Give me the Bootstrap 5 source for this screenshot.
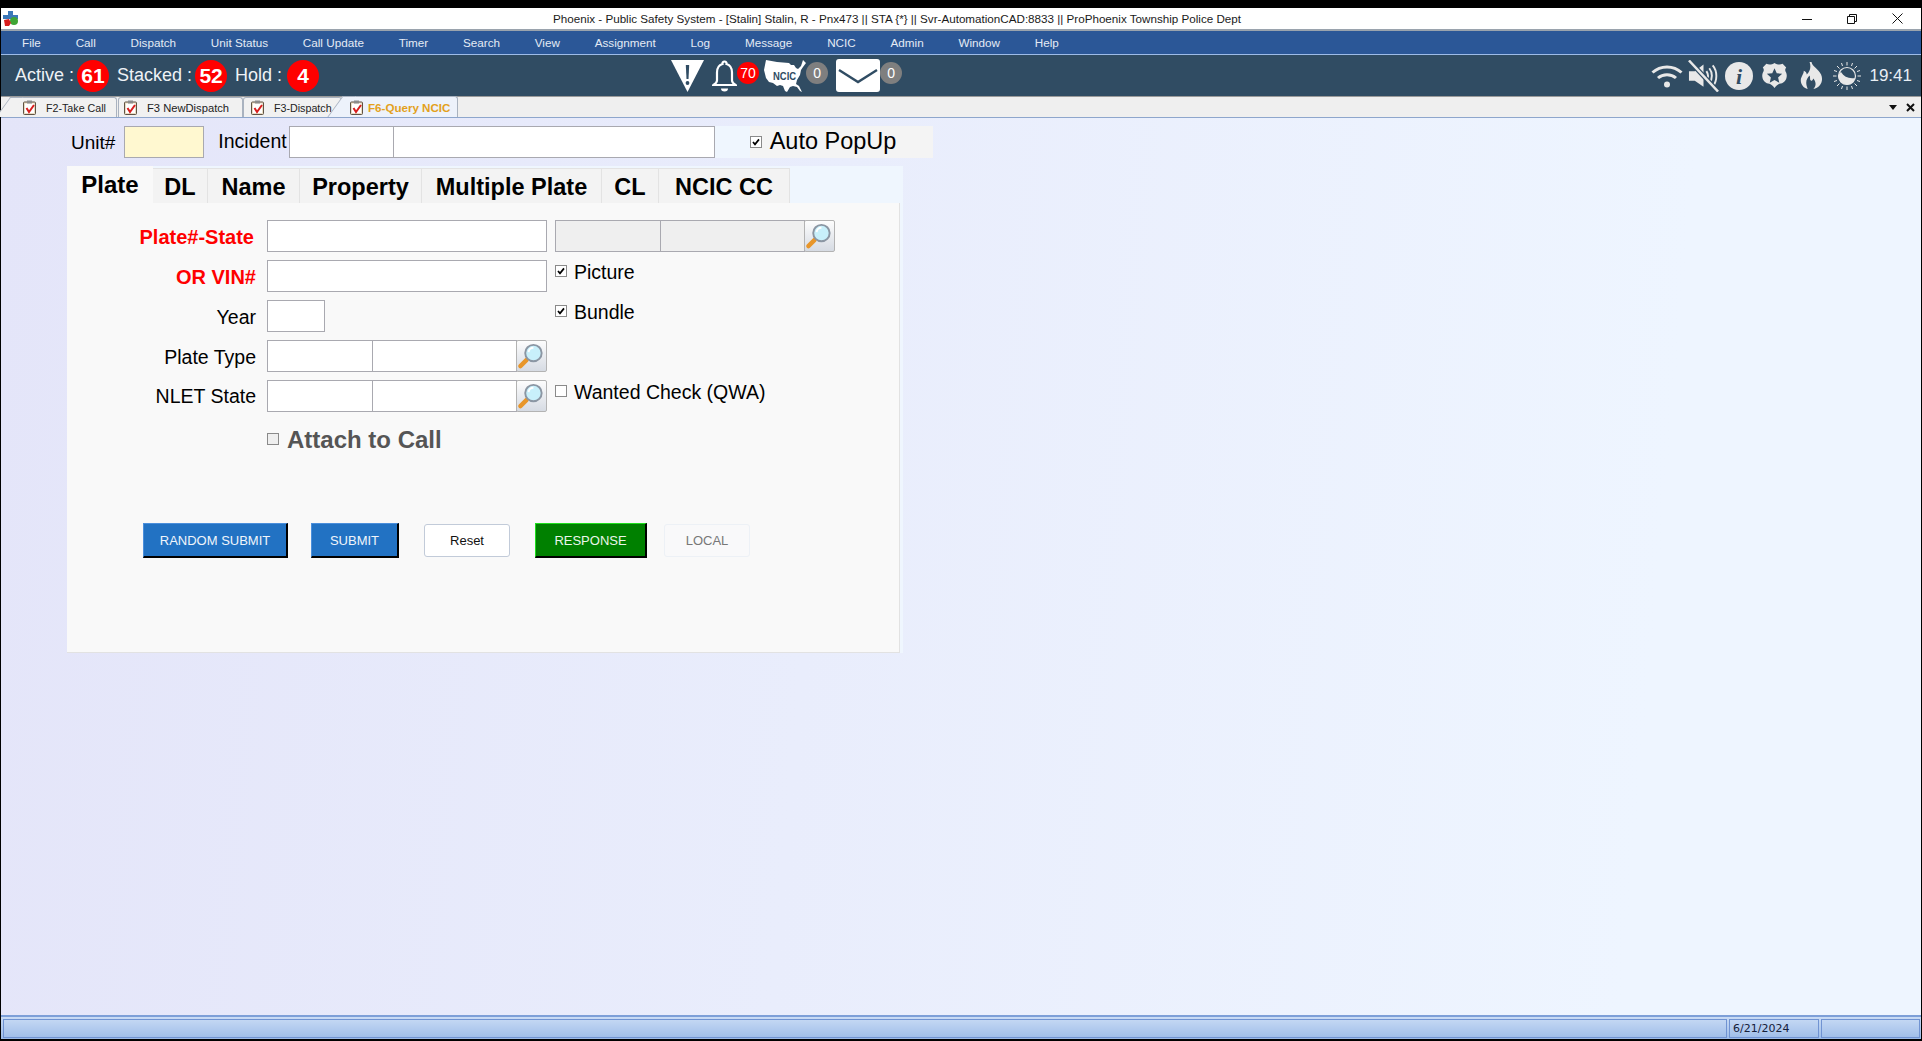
<!DOCTYPE html>
<html lang="en">
<head>
    <meta charset="UTF-8">
    <title>Phoenix - Public Safety System</title>
    <link href="https://cdn.jsdelivr.net/npm/bootstrap@5.3.0/dist/css/bootstrap.min.css" rel="stylesheet">
    <style>
        html, body { height: 100%; }
        body { background: #000; padding: 8px 1px 2px; font-family: "Liberation Sans", Arial, sans-serif; color: #000; overflow: hidden; }
        .app-shell { height: 100%; }

        /* window title */
        .title-bar { height: 21px; background: #fff; font-size: 11.65px; line-height: 21px; padding-left: 2px; }
        .title-text { margin-left: 534px; color: #1a1a1a; white-space: nowrap; }
        .win-controls { gap: 35px; padding-right: 18px; }

        /* menu */
        .menu-bar { height: 26px; padding: 1px 0 0 21px; background: #2b5797; border-top: 2px solid #9aa3ad; border-bottom: 1px solid #9dbbe8; gap: 34.800px; font-size: 11.700px; color: #e4ebf5; flex-wrap: nowrap; justify-content: flex-start; }

        /* counters and tray */
        .status-strip { height: 42px; background: #304c63; border-bottom: 1px solid #9a9a9a; color: #eef2f6; padding-left: 14px; }
        .count-label { font-size: 18px; white-space: nowrap; }
        .count-dot { width: 32px; height: 32px; background: #f00; color: #fff; font-weight: 700; font-size: 21px; margin: 0 8px 0 3px; }
        .count-dot.count-hold { margin-left: 5px; }
        .alert-icons { margin-left: 344px; }
        .mini-badge { width: 22px; height: 22px; color: #fff; font-size: 14px; align-self: flex-start; margin-top: 3px; }
        .mini-red { background: #f00; }
        .mini-grey { background: #7f7f7f; }
        .ncic-map { position: relative; width: 42px; height: 32px; margin-left: 5px; }
        .ncic-map span { position: absolute; left: 9px; top: 10px; font-size: 10.5px; line-height: 12px; font-weight: 700; color: #304c63; transform: scaleX(.9); transform-origin: left; }
        .tray-wifi { margin-right: 5px; }
        .tray-mute { margin-right: 6px; }
        .tray-info { margin-right: 8px; }
        .tray-shield { margin-right: 12px; }
        .tray-flame { margin-right: 10px; }
        .tray-time { font-size: 17px; color: #e8eef5; margin-left: 8px; padding-right: 9px; }

        /* document tabs */
        .doc-tabs { height: 21px; background: #efefef; border-bottom: 1px solid #8ea6cc; padding-left: 8px; }
        .doc-tab { position: relative; height: 20px; font-size: 10.7px; line-height: 21px; border: 1px solid #a9b2bf; border-bottom: 0; border-radius: 3px 3px 0 0; background: #f1f1f1; padding-left: 14px; white-space: nowrap; color: #222; }
        .doc-tab svg { width: 13px; height: 15px; margin-right: 10px; vertical-align: -3px; }
        .doc-tab.slanted { border-left: 0; }
        .doc-tab.slanted::before { content: ""; position: absolute; left: -6px; top: -1px; bottom: 0; width: 13px; background: inherit; border-left: 1px solid #a9b2bf; border-top: 1px solid #a9b2bf; transform: skewX(-36deg); }
        .doc-tab > * { position: relative; }
        .tab-one { width: 108px; }
        .tab-two { width: 125px; margin-left: 1px; padding-left: 5px; font-size: 11.2px; }
        .tab-three { width: 99px; padding-left: 7px; margin-left: 0; }
        .tab-four { width: 117px; margin-left: -1px; background: #edf2fb; height: 21px; padding-left: 9px; color: #e3a11d; font-weight: 700; font-size: 11.6px; z-index: 1; }
        .tab-four svg { margin-right: 5px; }
        .doc-tools { margin-left: auto; padding-right: 6px; gap: 9px; font-size: 13px; }

        /* main area */
        .work-area { background: linear-gradient(95deg, #e4e5f9 0%, #eef5ff 85%); padding-top: 8px; min-height: 0; }
        .unit-row { height: 32px; padding-left: 70px; }
        .field-box { border: 1px solid #a9a9b0; border-radius: 0; padding: 0 4px; height: 32px; background-color: #fff; box-shadow: none; }
        .field-unit { width: 80px; background: #fff8d0; margin-left: 9px; }
        .unit-label { font-size: 19px; margin-top: 3px; }
        .incident-label { font-size: 19.5px; margin: 1px 2px 0 14px; }
        .field-inc { width: 105px; }
        .field-inc2 { width: 322px; margin-left: -1px; }
        .pop-gap { width: 35px; background: #eff6fe; }
        .pop-box { width: 183px; background: #f4f4f4; font-size: 23.5px; }

        .query-wrap { width: 836px; margin: 8px 0 0 66px; background: #eff6fe; }
        .query-tabs { border: 0; flex-wrap: nowrap; height: 37px; align-items: flex-end; }
        .query-tabs .nav-link { height: 35px; margin: 0; padding: 0; border: 1px solid #e3e3e3; border-bottom: 0; border-left: 0; border-radius: 0; background: #f3f3f3; color: #000; font-size: 23.500px; font-weight: 700; line-height: 37px; text-align: center; white-space: nowrap; }
        .query-tabs .nav-link.active { height: 37px; background: #f9f9f9; border: 0; font-size: 24px; line-height: 38px; }
        .query-panel { width: 833px; height: 450px; background: #f9f9f9; border-right: 1px solid #e2e2e2; border-bottom: 1px solid #e2e2e2; padding-top: 17px; }

        .plate-grid { display: grid; grid-template-columns: 192px 280px 1fr; grid-auto-rows: 32px; gap: 8px; }
        .plate-label { font-size: 19.5px; text-align: right; padding: 4px 3px 0 0; white-space: nowrap; line-height: 26px; }
        .plate-req { color: #f00; font-weight: 700; font-size: 20px; }
        .plate-first { padding-right: 5px; }
        .plate-tight { padding-top: 3px; }
        .check-line { font-size: 19.5px; line-height: 24px; }
        .field-wide { width: 280px; }
        .field-year { width: 58px; }
        .field-code { width: 106px; }
        .field-desc { width: 145px; margin-left: -1px; }
        .field-off { background-color: #efefef; }
        .field-off.field-code { width: 106px; }
        .field-off.field-desc { width: 145px; }

        .look-btn { width: 31px; height: 32px; padding: 0; margin-left: -1px; border: 1px solid #b3b3b3; border-radius: 2px; background: linear-gradient(#fdfdfd, #d6dbe3); }
        .look-btn svg { display: block; width: 29px; height: 30px; }

        .tick { width: 12px; height: 12px; margin: 5px 7px 0 0; flex: none; border: 1px solid #8a8a8a; border-radius: 0; background-color: #fff; appearance: none; }
        .tick:checked { background-color: #fff; border-color: #8a8a8a; background-size: 10px; background-repeat: no-repeat; background-position: center; background-image: url("data:image/svg+xml,%3csvg xmlns='http://www.w3.org/2000/svg' viewBox='0 0 10 10'%3e%3cpath d='M2 5l2 2.4L8 2.4' fill='none' stroke='%23000' stroke-width='1.7'/%3e%3c/svg%3e"); }
        .pop-box .tick { margin: 0 8px 0 0; }
        .attach-line { color: #555; font-weight: 700; font-size: 24px; line-height: 36px; padding-top: 2px; grid-column: 2 / 4; }
        .attach-line .tick { margin: 11px 8px 0 0; background-color: #efefef; }

        .btn-bar { margin: 71px 0 0 76px; height: 35px; }
        .action-btn { height: 35px; padding: 1px 0 0; border-radius: 0; font-size: 13px; border-style: solid; border-width: 1px 2px 2px 1px; }
        .act-blue { background: #2272c3; color: #f0f5fb; border-color: #4b8fdc #000 #000 #4b8fdc; }
        .act-green { background: #008000; color: #eaf5ea; border-color: #1fe01f #000 #000 #1fe01f; }
        .act-plain { height: 33px; padding: 0; background: #fff; color: #111; border: 1px solid #c2cbd9; border-radius: 3px; }
        .act-off { height: 33px; padding: 0; background: #f9f9fa; color: #777; border: 1px solid #edf1f6; border-radius: 3px; }

        /* bottom bar */
        .foot-bar { height: 24px; background: linear-gradient(#c9dbf5, #9dbce8); border-top: 2px solid #7d9fd8; padding: 2px 1px 2px 2px; gap: 2px; font-family: "DejaVu Sans", sans-serif; font-size: 11px; color: #15203a; }
        .foot-cell { border: 1px solid #7093d2; height: 19px; line-height: 17px; padding-left: 3px; }
    </style>
</head>
<body>

    <svg width="0" height="0" class="position-absolute">
        <symbol id="clip" viewBox="0 0 13 15">
            <rect x=".5" y="2" width="12" height="12.5" rx="1" fill="#e9dcc4" stroke="#5f5243"/>
            <rect x="2" y="3.500" width="9" height="9.500" fill="#fff"/>
            <rect x="4" y=".5" width="5" height="3" fill="#8c8c8c"/>
            <path d="M3.500 8l2.500 4L11 5" fill="none" stroke="#d81e1e" stroke-width="2"/>
        </symbol>
        <symbol id="lens" viewBox="0 0 30 30">
            <path d="M10 19L3.500 25.500" stroke="#e8962a" stroke-width="4.500" stroke-linecap="round"/>
            <circle cx="17" cy="12" r="8.500" fill="#c8f0fb" stroke="#8b96a3" stroke-width="2"/>
            <path d="M12 11a5 5 0 0 1 5-4.500" fill="none" stroke="#fff" stroke-width="2"/>
        </symbol>
    </svg>

    <div class="app-shell d-flex flex-column">

        <div class="title-bar d-flex align-items-center">
            <svg width="16" height="16" viewBox="0 0 16 16">
                <path d="M5 0h5v4h5v4H0V4h5z" fill="#3b78b8"/>
                <circle cx="11" cy="10" r="4" fill="#3fa535"/>
                <path d="M1 9l5-1 2 4-2 3H2z" fill="#d81e1e"/>
            </svg>
            <span class="title-text">Phoenix - Public Safety System - [Stalin] Stalin, R - Pnx473 || STA {*} || Svr-AutomationCAD:8833 || ProPhoenix Township Police Dept</span>
            <div class="win-controls d-flex align-items-center ms-auto">
                <svg width="10" height="10" viewBox="0 0 10 10"><path d="M0 5.500h10" stroke="#111"/></svg>
                <svg width="10" height="10" viewBox="0 0 10 10"><path d="M.5 2.500h7v7h-7zM2.500 2.500V.5h7v7h-2" fill="none" stroke="#111"/></svg>
                <svg width="11" height="11" viewBox="0 0 11 11"><path d="M.5.5l10 10M10.500.5l-10 10" stroke="#111"/></svg>
            </div>
        </div>

        <nav class="navbar menu-bar">
            <span>File</span><span>Call</span><span>Dispatch</span><span>Unit Status</span><span>Call Update</span><span>Timer</span><span>Search</span><span>View</span><span>Assignment</span><span>Log</span><span>Message</span><span>NCIC</span><span>Admin</span><span>Window</span><span>Help</span>
        </nav>

        <div class="status-strip d-flex align-items-center">
            <span class="count-label">Active :</span>
            <span class="count-dot rounded-circle d-flex align-items-center justify-content-center">61</span>
            <span class="count-label">Stacked :</span>
            <span class="count-dot rounded-circle d-flex align-items-center justify-content-center">52</span>
            <span class="count-label">Hold :</span>
            <span class="count-dot count-hold rounded-circle d-flex align-items-center justify-content-center">4</span>

            <div class="alert-icons d-flex align-items-center">
                <svg width="33" height="32" viewBox="0 0 33 32">
                    <path d="M0 0h33L16.500 32z" fill="#fff"/>
                    <path d="M14.800 5h3.400l-.7 14h-2z" fill="#304c63"/>
                    <circle cx="16.500" cy="23" r="1.900" fill="#304c63"/>
                </svg>
                <svg class="ms-2" width="25" height="32" viewBox="0 0 25 32">
                    <path d="M12.500 1.500a2 2 0 0 1 2 2.500c4 1.200 5.500 4.500 5.500 8.500v8c0 2 2 3.500 3.500 4.500H1.500C3 24 5 22.500 5 20.500v-8C5 8.500 6.500 5.200 10.500 4a2 2 0 0 1 2-2.500z" fill="none" stroke="#fff" stroke-width="2.200"/>
                    <path d="M9 28.500h7a3.500 3 0 0 1-7 0z" fill="#fff"/>
                </svg>
                <span class="mini-badge mini-red rounded-circle d-flex align-items-center justify-content-center">70</span>
                <div class="ncic-map">
                    <svg width="42" height="32" viewBox="0 0 42 32">
                        <path d="M2 0L13 2 25 3 27 5 30 5 32 8 34 9 37 6 39 0 42 3 39 7 37 10 36 15 33 20 32 24 35 26 38 32 36 31 33 27 29 26 26 27 23 32 21 31 19 26 16 25 13 26 9 23 5 22 2 18 0 10z" fill="#fff"/>
                    </svg>
                    <span>NCIC</span>
                </div>
                <span class="mini-badge mini-grey rounded-circle d-flex align-items-center justify-content-center">0</span>
                <svg class="ms-2" width="44" height="33" viewBox="0 0 44 33">
                    <rect width="44" height="33" rx="3" fill="#fff"/>
                    <path d="M3 11l19 12 19-12" fill="none" stroke="#304c63" stroke-width="2.400"/>
                </svg>
                <span class="mini-badge mini-grey rounded-circle d-flex align-items-center justify-content-center">0</span>
            </div>

            <div class="d-flex align-items-center ms-auto">
                <svg class="tray-wifi" width="32" height="24" viewBox="0 0 32 24" fill="none" stroke="#e8e8e8" stroke-width="3">
                    <path d="M1.500 8.500c8-7.500 21-7.500 29 0"/>
                    <path d="M7 14c5-4.500 13-4.500 18 0"/>
                    <circle cx="16" cy="20.500" r="3" fill="#e8e8e8" stroke="none"/>
                </svg>
                <svg class="tray-mute" width="31" height="32" viewBox="0 0 32 32" fill="none" stroke="#e8e8e8">
                    <path d="M1 11h6l9-7v23l-9-6H1z" fill="#e8e8e8" stroke="none"/>
                    <path d="M19 11c2 3 2 7 0 10M22 8c3.500 4.500 3.500 11 0 16M25.500 5c5 6 5 16 0 22" stroke-width="2"/>
                    <path d="M1 0l30 32" stroke="#304c63" stroke-width="5"/>
                    <path d="M1 0l30 32" stroke-width="2.600"/>
                </svg>
                <svg class="tray-info" width="28" height="28" viewBox="0 0 28 28">
                    <circle cx="14" cy="14" r="14" fill="#e8e8e8"/>
                    <text x="14" y="22" text-anchor="middle" font-family="Liberation Serif" font-style="italic" font-weight="700" font-size="22" fill="#304c63">i</text>
                </svg>
                <svg class="tray-shield" width="27" height="27" viewBox="0 0 30 28">
                    <path d="M6 1c3 1.500 6 1 9-1 3 2 6 2.500 9 1l4 4c-1.500 2-1.500 4 0 6 2 5-1 11-6 12-3 .5-5 2-7 5-2-3-4-4.500-7-5-5-1-8-7-6-12 1.500-2 1.500-4 0-6z" fill="#e8e8e8"/>
                    <path d="M15 6l2.500 5.500 6 .6-4.500 4 1.300 6L15 19l-5.300 3.100 1.300-6-4.500-4 6-.6z" fill="#304c63"/>
                </svg>
                <svg class="tray-flame" width="23" height="27" viewBox="0 0 24 28">
                    <path d="M12 0c1 5 7 7 10 13 3 7-1 14-8 15 3-3 3-7 0-11-1 2-2 3-3 2-1-1 0-3-1-5-3 3-5 7-2 14-5-1-8-6-7-11 1-3 3-5 3-8 2 1 3 2 3 4 3-3 5-7 3-13z" fill="#e8e8e8"/>
                </svg>
                <svg width="28" height="28" viewBox="0 0 28 28" stroke="#e8e8e8">
                    <circle cx="14" cy="14" r="8.500" fill="#304c63" stroke-width="1.200"/>
                    <path d="M8 10c3 5 8 7 14 6-1 4-4 6.500-8 6.500-4.500 0-8.500-4-8.500-8.500 0-1.500 1-3 2.500-4z" fill="#e8e8e8" stroke="none"/>
                    <path d="M14 0v3.500M14 24.500V28M0 14h3.500M24.500 14H28M4 4l2.500 2.500M21.500 21.500L24 24M24 4l-2.500 2.500M6.500 21.500L4 24M8.500 1l1 3M18.500 24l1 3M19.500 1l-1 3M9.500 24l-1 3M1 8.500l3 1M24 18.500l3 1M27 8.500l-3 1M4 18.500l-3 1" stroke-width="1"/>
                </svg>
                <span class="tray-time">19:41</span>
            </div>
        </div>

        <div class="doc-tabs d-flex align-items-end">
            <div class="doc-tab slanted tab-one"><svg><use href="#clip"/></svg><span>F2-Take Call</span></div>
            <div class="doc-tab tab-two"><svg><use href="#clip"/></svg><span>F3 NewDispatch</span></div>
            <div class="doc-tab tab-three"><svg><use href="#clip"/></svg><span>F3-Dispatch</span></div>
            <div class="doc-tab slanted tab-four"><svg><use href="#clip"/></svg><span>F6-Query NCIC</span></div>
            <div class="doc-tools d-flex align-items-center align-self-center">
                <svg width="8" height="5" viewBox="0 0 8 5"><path d="M0 0h8L4 5z" fill="#111"/></svg>
                <svg width="9" height="9" viewBox="0 0 9 9"><path d="M1 1l7 7M8 1L1 8" stroke="#111" stroke-width="2"/></svg>
            </div>
        </div>

        <main class="work-area flex-grow-1">
            <div class="unit-row d-flex">
                <label class="unit-label">Unit#</label>
                <input class="form-control field-box field-unit" type="text">
                <label class="incident-label">Incident</label>
                <input class="form-control field-box field-inc" type="text">
                <input class="form-control field-box field-inc2" type="text">
                <div class="pop-gap"></div>
                <div class="pop-box d-flex align-items-center">
                    <input class="tick" type="checkbox" checked>
                    <span>Auto PopUp</span>
                </div>
            </div>

            <div class="query-wrap">
                <ul class="nav nav-tabs query-tabs">
                    <li class="nav-item"><a class="nav-link active" style="width:86px">Plate</a></li>
                    <li class="nav-item"><a class="nav-link" style="width:55px">DL</a></li>
                    <li class="nav-item"><a class="nav-link" style="width:92px">Name</a></li>
                    <li class="nav-item"><a class="nav-link" style="width:122px">Property</a></li>
                    <li class="nav-item"><a class="nav-link" style="width:180px">Multiple Plate</a></li>
                    <li class="nav-item"><a class="nav-link" style="width:57px">CL</a></li>
                    <li class="nav-item"><a class="nav-link" style="width:131px">NCIC CC</a></li>
                </ul>

                <div class="query-panel">
                    <div class="plate-grid">
                        <label class="plate-label plate-req plate-first">Plate#-State</label>
                        <input class="form-control field-box field-wide" type="text">
                        <div class="d-flex">
                            <input class="form-control field-box field-code field-off" type="text">
                            <input class="form-control field-box field-desc field-off" type="text">
                            <button class="btn look-btn" type="button"><svg><use href="#lens"/></svg></button>
                        </div>

                        <label class="plate-label plate-req">OR VIN#</label>
                        <input class="form-control field-box field-wide" type="text">
                        <div class="check-line d-flex"><input class="tick" type="checkbox" checked><span>Picture</span></div>

                        <label class="plate-label">Year</label>
                        <input class="form-control field-box field-year" type="text">
                        <div class="check-line d-flex"><input class="tick" type="checkbox" checked><span>Bundle</span></div>

                        <label class="plate-label">Plate Type</label>
                        <div class="d-flex">
                            <input class="form-control field-box field-code" type="text">
                            <input class="form-control field-box field-desc" type="text">
                            <button class="btn look-btn" type="button"><svg><use href="#lens"/></svg></button>
                        </div>
                        <div></div>

                        <label class="plate-label plate-tight">NLET State</label>
                        <div class="d-flex">
                            <input class="form-control field-box field-code" type="text">
                            <input class="form-control field-box field-desc" type="text">
                            <button class="btn look-btn" type="button"><svg><use href="#lens"/></svg></button>
                        </div>
                        <div class="check-line d-flex"><input class="tick" type="checkbox"><span>Wanted Check (QWA)</span></div>

                        <div></div>
                        <div class="attach-line d-flex"><input class="tick" type="checkbox" disabled><span>Attach to Call</span></div>
                    </div>

                    <div class="btn-bar d-flex align-items-center">
                        <button class="btn action-btn act-blue" style="width:145px" type="button">RANDOM SUBMIT</button>
                        <button class="btn action-btn act-blue" style="width:88px;margin-left:23px" type="button">SUBMIT</button>
                        <button class="btn action-btn act-plain" style="width:86px;margin-left:25px" type="button">Reset</button>
                        <button class="btn action-btn act-green" style="width:112px;margin-left:25px" type="button">RESPONSE</button>
                        <button class="btn action-btn act-off" style="width:86px;margin-left:17px" type="button">LOCAL</button>
                    </div>
                </div>
            </div>
        </main>

        <footer class="foot-bar d-flex">
            <div class="foot-cell flex-grow-1"></div>
            <div class="foot-cell" style="width:90px">6/21/2024</div>
            <div class="foot-cell" style="width:99px"></div>
        </footer>
    </div>

    <script src="https://cdn.jsdelivr.net/npm/bootstrap@5.3.0/dist/js/bootstrap.bundle.min.js"></script>
</body>
</html>
